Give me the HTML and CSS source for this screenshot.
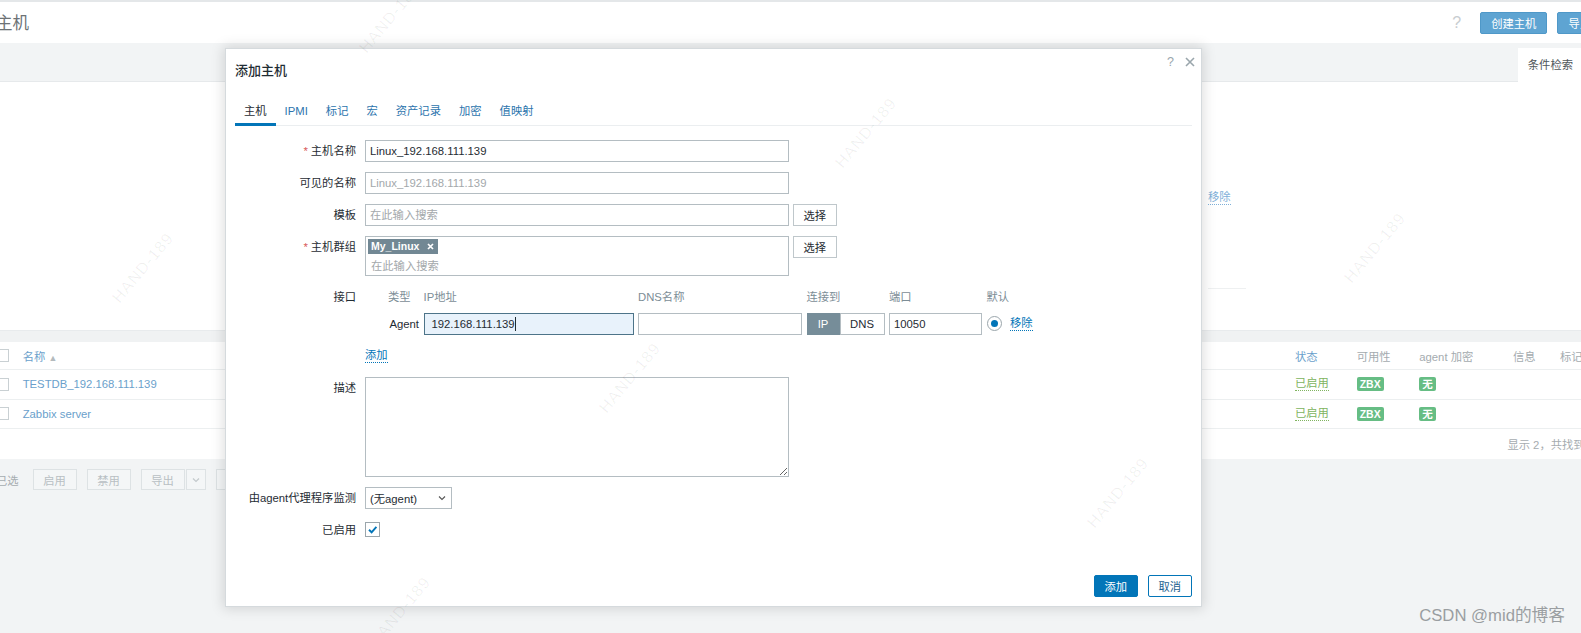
FILE: index.html
```html
<!DOCTYPE html>
<html lang="zh">
<head>
<meta charset="utf-8">
<title>主机</title>
<link rel="stylesheet" href="styles.css">
</head>
<body>
<div class="page">
  <header class="topbar">
    <h1 class="title">主机</h1>
    <div class="top-actions">
      <span class="help">?</span>
      <button class="btn-top">创建主机</button>
      <button class="btn-top">导入</button>
    </div>
  </header>
  <div class="filter-nav">
    <div class="filter-tab">条件检索<svg class="tab-arrow" width="8" height="8" viewBox="0 0 8 8"><path d="M1 2 L4 5 L7 2" fill="none" stroke="#666" stroke-width="1.3"/></svg></div>
  </div>
  <div class="filter-body">
    <a class="bg-link">移除</a>
    <div class="filter-line"></div>
  </div>
  <div class="strip"></div>
  <div class="list">
    <div class="trow thead">
      <span class="cell"><i class="cb"></i></span>
      <span class="cell bglink">名称 <small class="sort">▲</small></span>
      <span class="cell bglink">状态</span>
      <span class="cell muted">可用性</span>
      <span class="cell muted">agent 加密</span>
      <span class="cell muted">信息</span>
      <span class="cell muted">标记</span>
    </div>
    <div class="trow">
      <span class="cell"><i class="cb"></i></span>
      <span class="cell bglink">TESTDB_192.168.111.139</span>
      <span class="cell"><span class="status">已启用</span></span>
      <span class="cell"><span class="badge">ZBX</span></span>
      <span class="cell"><span class="badge">无</span></span>
      <span class="cell"></span>
      <span class="cell"></span>
    </div>
    <div class="trow">
      <span class="cell"><i class="cb"></i></span>
      <span class="cell bglink">Zabbix server</span>
      <span class="cell"><span class="status">已启用</span></span>
      <span class="cell"><span class="badge">ZBX</span></span>
      <span class="cell"><span class="badge">无</span></span>
      <span class="cell"></span>
      <span class="cell"></span>
    </div>
    <div class="tfoot">显示 2，共找到 2</div>
  </div>
  <div class="actions">
    <span class="sel">已选</span>
    <button class="btn-dis">启用</button>
    <button class="btn-dis">禁用</button>
    <span class="split">
      <button class="btn-dis">导出</button>
      <button class="btn-dis btn-drop"><svg width="8" height="6" viewBox="0 0 8 6"><path d="M1 1.5 L4 4.5 L7 1.5" fill="none" stroke="#c3c9cc" stroke-width="1.2"/></svg></button>
    </span>
    <button class="btn-dis">批量更新</button>
  </div>
</div>

<div class="dialog">
  <div class="dlg-head">
    <span class="dlg-title">添加主机</span>
    <span class="dlg-icons">
      <span class="dlg-help">?</span>
      <svg class="dlg-close" width="10" height="10" viewBox="0 0 10 10"><path d="M1 1 L9 9 M9 1 L1 9" stroke="#9aa6ac" stroke-width="1.6"/></svg>
    </span>
  </div>
  <nav class="tabs">
    <a class="tab active">主机</a>
    <a class="tab">IPMI</a>
    <a class="tab">标记</a>
    <a class="tab">宏</a>
    <a class="tab">资产记录</a>
    <a class="tab">加密</a>
    <a class="tab">值映射</a>
  </nav>
  <div class="form">
    <label class="lbl req">主机名称</label>
    <div class="ctl"><div class="input">Linux_192.168.111.139</div></div>

    <label class="lbl">可见的名称</label>
    <div class="ctl"><div class="input ph">Linux_192.168.111.139</div></div>

    <label class="lbl">模板</label>
    <div class="ctl row"><div class="input ph">在此输入搜索</div><button class="btn-grey">选择</button></div>

    <label class="lbl req">主机群组</label>
    <div class="ctl row">
      <div class="multi">
        <span class="tag">My_Linux<svg class="tag-x" width="7" height="7" viewBox="0 0 7 7"><path d="M1 1 L6 6 M6 1 L1 6" stroke="#fff" stroke-width="1.7"/></svg></span>
        <span class="multi-ph">在此输入搜索</span>
      </div>
      <button class="btn-grey">选择</button>
    </div>

    <label class="lbl">接口</label>
    <div class="ctl">
      <div class="iface">
        <span></span>
        <span class="ih">类型</span>
        <span class="ih">IP地址</span>
        <span class="ih">DNS名称</span>
        <span class="ih">连接到</span>
        <span class="ih">端口</span>
        <span class="ih">默认</span>
        <span></span>

        <span></span>
        <span class="itype">Agent</span>
        <div class="input focus">192.168.111.139<i class="caret"></i></div>
        <div class="input"></div>
        <div class="toggle"><span class="tg on">IP</span><span class="tg">DNS</span></div>
        <div class="input">10050</div>
        <span class="radio"><i></i></span>
        <a class="link rm">移除</a>
      </div>
    </div>

    <span></span>
    <div class="ctl line"><a class="link">添加</a></div>

    <label class="lbl">描述</label>
    <div class="ctl"><textarea class="textarea"></textarea></div>

    <label class="lbl">由agent代理程序监测</label>
    <div class="ctl"><div class="select">(无agent)<svg width="8" height="6" viewBox="0 0 8 6"><path d="M1 1.5 L4 4.5 L7 1.5" fill="none" stroke="#555" stroke-width="1.1"/></svg></div></div>

    <label class="lbl">已启用</label>
    <div class="ctl line"><span class="check"><svg width="13" height="13" viewBox="0 0 13 13"><path d="M3 6.8 L5.6 9.3 L10.4 3.8" fill="none" stroke="#0275b8" stroke-width="1.9"/></svg></span></div>
  </div>
  <div class="dlg-foot">
    <button class="btn-main">添加</button>
    <button class="btn-alt">取消</button>
  </div>
</div>

<div class="wm wm1">HAND-189</div>
<div class="wm wm2">HAND-189</div>
<div class="wm wm3">HAND-189</div>
<div class="wm wm4">HAND-189</div>
<div class="wm wm5">HAND-189</div>
<div class="wm wm6">HAND-189</div>
<div class="wm wm7">HAND-189</div>

<div class="csdn">CSDN @mid的博客</div>
</body>
</html>
```

FILE: styles.css
```css
* { box-sizing: border-box; }
html, body { margin: 0; padding: 0; }
body {
  width: 1581px;
  height: 633px;
  overflow: hidden;
  position: relative;
  background: #f2f4f5;
  font-family: "Liberation Sans", Arial, "Noto Sans CJK SC", sans-serif;
  font-size: 11.3px;
  color: #1f2c33;
}
button { font-family: inherit; font-size: 11.3px; cursor: default; }

/* ---------- background page ---------- */
.page { margin: 0 -21px 0 -4px; }

.topbar {
  height: 43px;
  background: #fff;
  border-top: 2px solid #e4e7e9;
  display: flex;
  align-items: center;
  justify-content: space-between;
}
.title { margin: 0; font-size: 16.5px; font-weight: normal; color: #6d7275; line-height: 20px; }
.top-actions { display: flex; align-items: center; gap: 10px; }
.help { font-size: 16px; color: #c8cdd0; margin-right: 8px; width: 10px; }
.btn-top {
  height: 22px;
  padding: 0 10px;
  background: #5ea4d2;
  border: 1px solid #4f98c8;
  border-radius: 2px;
  color: #fff;
}

.filter-nav {
  height: 39px;
  background: #f2f4f5;
  border-bottom: 1px solid #e6e9eb;
  display: flex;
  justify-content: flex-end;
  align-items: flex-end;
  padding-right: 2px;
}
.filter-tab {
  height: 34px;
  margin-bottom: -1px;
  background: #fff;
  padding: 0 10px;
  line-height: 34px;
  color: #4f575b;
  display: flex;
  align-items: center;
  gap: 9px;
}
.tab-arrow { margin-top: -12px; }

.filter-body {
  height: 248px;
  background: #fff;
  padding: 108px 0 0 1212px;
}
.bg-link { color: #7fb0d8; border-bottom: 1px dotted #7fb0d8; line-height: 14px; display: inline-block; }
.filter-line { width: 38px; height: 1px; background: #eef0f1; margin-top: 83px; }

.strip { height: 12px; background: #f0f2f3; border-top: 1px solid #e8ebed; }

.list { background: #fff; }
.trow {
  display: grid;
  grid-template-columns: 26.7px 1272.3px 61.7px 62.6px 93.7px 47px 1fr;
  align-items: center;
  height: 29.5px;
  border-bottom: 1px solid #eceff0;
}
.thead { height: 28px; }
.cell { white-space: nowrap; }
.bglink { color: #6a9fcb; }
.muted { color: #a4abaf; }
.sort { font-size: 9px; color: #b4babd; }
.cb {
  display: block;
  width: 13px; height: 13px;
  border: 1px solid #c9d0d3;
  background: #fff;
}
.status { color: #80b460; border-bottom: 1px dotted #80b460; line-height: 13px; display: inline-block; }
.badge {
  display: inline-block;
  background: #66bd84;
  color: #fff;
  font-weight: bold;
  font-size: 10.5px;
  line-height: 14px;
  padding: 0 3px;
  border-radius: 2px;
}
.tfoot {
  height: 30px;
  display: flex;
  align-items: center;
  justify-content: flex-end;
  padding-right: 8px;
  color: #a6acb0;
}

.actions {
  padding-top: 10px;
  display: flex;
  align-items: center;
  gap: 10px;
}
.sel { color: #a6acb0; margin-right: 4px; }
.btn-dis {
  width: 44px;
  height: 21px;
  background: #f4f6f7;
  border: 1px solid #dde2e4;
  color: #b8bfc3;
  padding: 0;
}
.split { display: flex; gap: 1px; }
.btn-drop { width: 20px; display: flex; align-items: center; justify-content: center; }
.actions > .btn-dis:last-child { width: 70px; }

/* ---------- dialog ---------- */
.dialog {
  position: absolute;
  left: 225px;
  top: 48px;
  width: 977px;
  background: #fff;
  border: 1px solid #d5dadd;
  box-shadow: 0 0 12px 2px rgba(0, 0, 0, 0.13);
  padding: 0 9px 9px;
}
.dlg-head {
  height: 43px;
  display: flex;
  justify-content: space-between;
  align-items: flex-start;
}
.dlg-title { line-height: 43px; font-size: 13px; color: #1f2c33; font-weight: 500; }
.dlg-icons { display: flex; align-items: center; gap: 11px; margin-top: 6px; margin-right: -3px; height: 14px; }
.dlg-help { color: #9aa6ac; font-size: 12.5px; line-height: 14px; }

.tabs {
  display: flex;
  border-bottom: 1px solid #ebeef0;
}
.tab {
  padding: 12px 9px 5px;
  line-height: 14px;
  border-bottom: 3px solid transparent;
  margin-bottom: -1px;
  color: #2c74ad;
  white-space: nowrap;
}
.tab.active { color: #1f2c33; border-bottom-color: #0275b8; }

.form {
  display: grid;
  grid-template-columns: 121px 1fr;
  column-gap: 9px;
  row-gap: 10px;
  padding-top: 14px;
  align-items: start;
}
.lbl {
  text-align: right;
  line-height: 22px;
  white-space: nowrap;
  color: #1f2c33;
}
.req::before { content: "*"; color: #d85a5a; margin-right: 3px; }
.ctl.row { display: flex; gap: 3.5px; align-items: flex-start; }
.ctl.line { height: 22px; display: flex; align-items: center; }

.input {
  width: 424px;
  height: 22px;
  border: 1px solid #b4bdc2;
  background: #fff;
  padding: 0 4px;
  line-height: 20px;
  white-space: nowrap;
  overflow: hidden;
  color: #1f2c33;
}
.input.ph { color: #a3a8ab; }
.btn-grey {
  width: 44.5px;
  height: 22px;
  background: #fff;
  border: 1px solid #bfc7cb;
  color: #1f2c33;
  padding: 0;
}

.multi {
  width: 424px;
  height: 40px;
  border: 1px solid #b4bdc2;
  padding: 2px 2px;
  display: flex;
  flex-direction: column;
  align-items: flex-start;
}
.tag {
  height: 15px;
  background: #728894;
  color: #fff;
  font-weight: bold;
  font-size: 10.5px;
  line-height: 15px;
  padding: 0 4px 0 3px;
  display: inline-flex;
  align-items: center;
  gap: 8px;
}
.multi-ph { color: #a3a8ab; line-height: 16px; margin: 4px 0 0 3px; }

.iface {
  display: grid;
  grid-template-columns: 18.5px 31px 210px 164px 78px 93px 15px auto;
  column-gap: 4.5px;
  row-gap: 4.5px;
  align-items: center;
}
.iface .input { width: auto; }
.ih { line-height: 22px; color: #7c8d96; white-space: nowrap; }
.itype { text-align: right; line-height: 22px; }
.input.focus { background: #e8f2fb; border-color: #4d7489; padding-left: 7px; }
.caret { display: inline-block; width: 1px; height: 14px; background: #1f2c33; vertical-align: -3px; }
.toggle { display: flex; height: 22px; }
.tg {
  flex: 1 1 auto;
  display: flex;
  align-items: center;
  justify-content: center;
  border: 1px solid #b4bdc2;
  background: #fff;
}
.tg.on { flex: 0 0 33px; background: #768d99; border-color: #768d99; color: #fff; }
.radio {
  width: 15px; height: 15px;
  border: 1px solid #9ba6ac;
  border-radius: 50%;
  display: flex;
  align-items: center;
  justify-content: center;
  background: #fff;
}
.radio i { width: 7px; height: 7px; border-radius: 50%; background: #0275b8; display: block; }
.link {
  color: #0275b8;
  border-bottom: 1px dotted #0275b8;
  line-height: 14px;
  display: inline-block;
  justify-self: start;
}
.rm { margin-left: 4px; }

.textarea {
  display: block;
  width: 423.5px;
  height: 100px;
  border: 1px solid #b4bdc2;
  margin: 0;
  padding: 4px;
  font-family: inherit;
  font-size: 11.3px;
  background: #fff;
}
.select {
  width: 87px;
  height: 22px;
  border: 1px solid #b4bdc2;
  padding: 0 5px 0 4px;
  display: flex;
  align-items: center;
  justify-content: space-between;
}
.check {
  width: 15px; height: 15px;
  border: 1px solid #9ba6ac;
  background: #fff;
  display: flex;
  align-items: center;
  justify-content: center;
}

.dlg-foot {
  margin-top: 34px;
  display: flex;
  justify-content: flex-end;
  gap: 9.5px;
}
.btn-main, .btn-alt {
  width: 44.5px;
  height: 22px;
  padding: 0;
  border: 1px solid #0275b8;
  border-radius: 2px;
}
.btn-main { background: #0275b8; color: #fff; }
.btn-alt { background: #fff; color: #1d5f90; }

/* ---------- watermarks ---------- */
.wm {
  position: absolute;
  transform: translate(-50%, -50%) rotate(-50deg);
  font-size: 16px;
  letter-spacing: 1px;
  color: rgba(0, 0, 0, 0.06);
  white-space: nowrap;
  pointer-events: none;
}
.wm1 { left: 390px; top: 18px; }
.wm2 { left: 866px; top: 133px; }
.wm3 { left: 143px; top: 268px; }
.wm4 { left: 1375px; top: 248px; }
.wm5 { left: 630px; top: 378px; }
.wm6 { left: 1118px; top: 493px; }
.wm7 { left: 400px; top: 612px; }

.csdn {
  position: absolute;
  right: 16px;
  bottom: 8px;
  font-size: 16.7px;
  line-height: 18px;
  color: #9a9ea1;
}
```
